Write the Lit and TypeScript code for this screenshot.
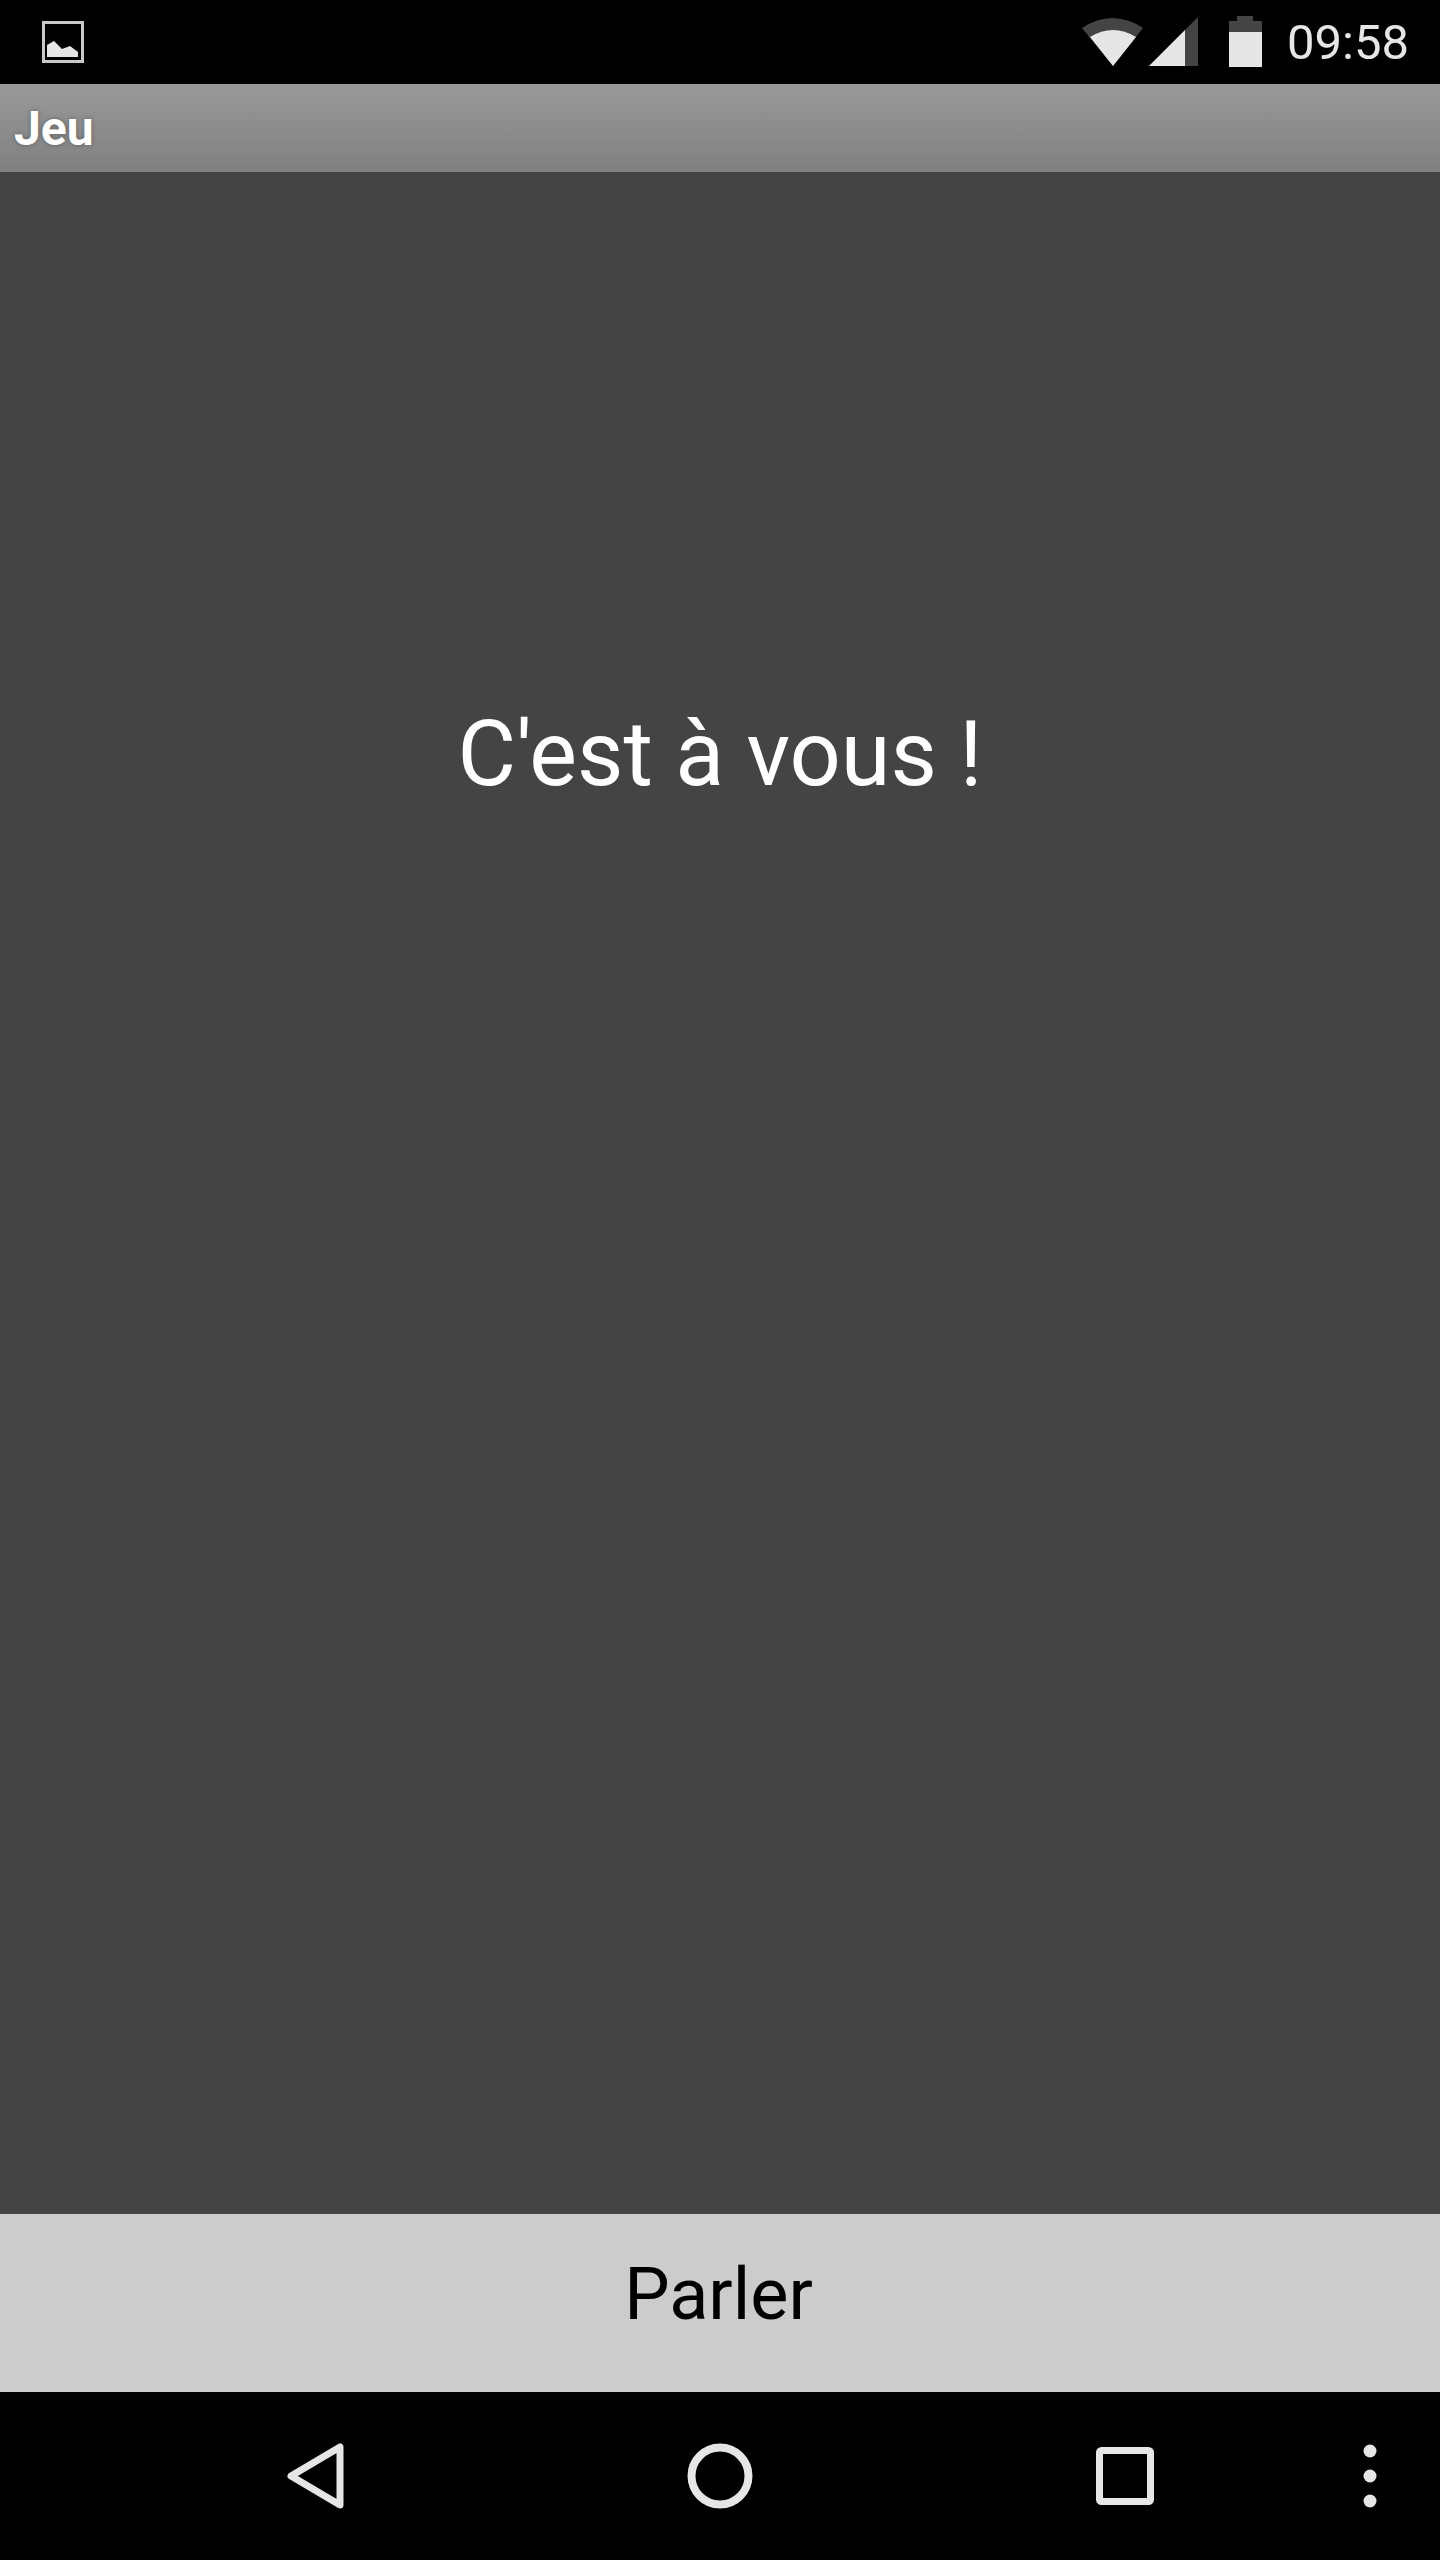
import { css, html, LitElement } from "lit";
import { customElement } from "lit/decorators.js";

@customElement("app-root")
export class AppRoot extends LitElement {
  static styles = css`
    :host {
      display: flex;
      flex-direction: column;
      width: 1440px;
      height: 2560px;
      font-family: Roboto, "Liberation Sans", sans-serif;
    }
    svg {
      display: block;
      flex: none;
    }
    .status {
      height: 84px;
      background: #000;
      display: flex;
      align-items: flex-start;
      padding: 0 30px 0 41px;
      box-sizing: border-box;
    }
    .status .note {
      margin-top: 20px;
    }
    .status .wifi {
      margin: 16px 0 0 996px;
    }
    .status .signal {
      margin: 16px 0 0 4px;
    }
    .status .battery {
      margin: 16px 0 0 30px;
    }
    .clock {
      margin-left: 24px;
      color: #e6e6e6;
      font-size: 49px;
      line-height: 86px;
      white-space: nowrap;
    }
    .actionbar {
      height: 88px;
      background: linear-gradient(#999, #808080);
      color: #fff;
      font-size: 48px;
      font-weight: 700;
      line-height: 89px;
      padding-left: 14px;
      text-shadow: 0 0 4px rgba(0, 0, 0, 0.35);
    }
    .content {
      flex: 1;
      background: #444;
      color: #fff;
      font-size: 90px;
      line-height: 100px;
      text-align: center;
      padding-top: 533px;
    }
    .speak {
      height: 178px;
      background: #ccc;
      color: #000;
      font-size: 72px;
      line-height: 162px;
      text-align: center;
      padding-right: 3px;
    }
    .nav {
      height: 168px;
      background: #000;
      display: flex;
      align-items: center;
      padding-left: 285px;
    }
    .nav .home {
      margin-left: 342px;
    }
    .nav .recent {
      margin-left: 343px;
    }
    .nav .more {
      margin-left: 209px;
    }
  `;

  render() {
    return html`
      <div class="status">
        <svg class="note" width="44" height="44" viewBox="0 0 44 44">
          <rect x="2.5" y="2.5" width="39" height="39" fill="none" stroke="#c8c8c8" stroke-width="3" />
          <path d="M6 37V25L13 21L21 29L29 26L37 32V37Z" fill="#e6e6e6" />
        </svg>
        <svg class="wifi" width="64" height="52" viewBox="0 0 64 52">
          <path d="M1 12Q31-8 62 12L32 50Z" fill="#444" />
          <path d="M9 21Q32 7 55 21L32 50Z" fill="#e6e6e6" />
        </svg>
        <svg class="signal" width="50" height="52" viewBox="0 0 50 52">
          <path d="M0 50L49 1V50Z" fill="#444" />
          <path d="M0 50L36 14V50Z" fill="#e6e6e6" />
        </svg>
        <svg class="battery" width="34" height="52" viewBox="0 0 34 52">
          <path d="M8 0H24V5H33V16H0V5H8Z" fill="#444" />
          <rect x="0" y="16" width="33" height="35" fill="#e6e6e6" />
        </svg>
        <span class="clock">09:58</span>
      </div>
      <div class="actionbar">Jeu</div>
      <div class="content">C'est à vous !</div>
      <div class="speak">Parler</div>
      <div class="nav">
        <svg width="60" height="68" viewBox="0 0 60 68">
          <path d="M6 34L55 5V63Z" fill="none" stroke="#e6e6e6" stroke-width="7" stroke-linejoin="round" />
        </svg>
        <svg class="home" width="66" height="66" viewBox="0 0 66 66">
          <circle cx="33" cy="33" r="28.5" fill="none" stroke="#e6e6e6" stroke-width="8" />
        </svg>
        <svg class="recent" width="58" height="58" viewBox="0 0 58 58">
          <rect x="3.5" y="3.5" width="51" height="51" rx="2" fill="none" stroke="#e6e6e6" stroke-width="7" />
        </svg>
        <svg class="more" width="14" height="64" viewBox="0 0 14 64">
          <circle cx="7" cy="7" r="6.5" fill="#e6e6e6" />
          <circle cx="7" cy="32" r="6.5" fill="#e6e6e6" />
          <circle cx="7" cy="57" r="6.5" fill="#e6e6e6" />
        </svg>
      </div>
    `;
  }
}
